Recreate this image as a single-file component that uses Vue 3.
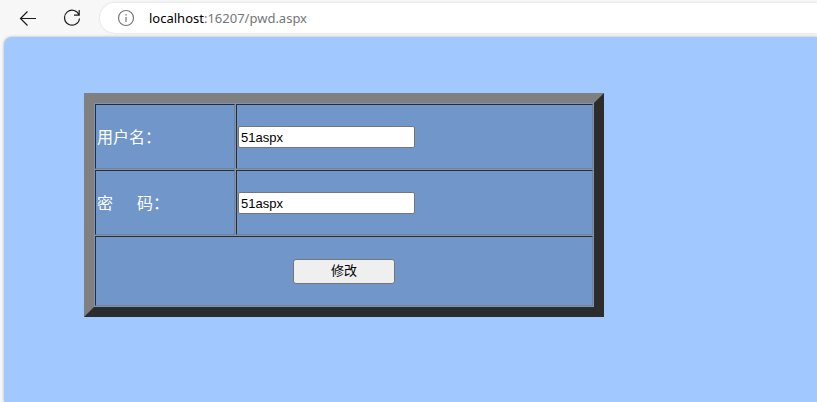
<template>
  <div class="browser">
    <header class="toolbar">
      <button type="button" class="nav-btn" aria-label="Back">
        <svg width="18" height="18" viewBox="0 0 18 18">
          <path d="M17 9.5H1.5M8.5 2.5L1.5 9.5L8.5 16.5" />
        </svg>
      </button>
      <button type="button" class="nav-btn" aria-label="Refresh">
        <svg width="18" height="18" viewBox="0 0 18 18">
          <path d="M16.2 6.4A7.5 7.5 0 1 0 16.5 9.5M16.2 1V6.2H11" />
        </svg>
      </button>
      <div class="address">
        <svg class="info" width="18" height="18" viewBox="0 0 18 18">
          <circle cx="9" cy="9" r="7.5" />
          <path d="M9 8V13M9 5V6.6" />
        </svg>
        <span class="url"><span class="host">{{ host }}</span>{{ path }}</span>
      </div>
    </header>

    <main class="page">
      <form class="pwd-form" @submit.prevent>
        <table class="pwd-table">
          <tbody>
            <tr v-for="field in fields" :key="field.id" class="field-row">
              <td class="label-cell">
                <label :for="field.id">{{ field.label }}</label>
              </td>
              <td>
                <input :id="field.id" v-model="field.value" type="text" class="text-box" />
              </td>
            </tr>
            <tr class="action-row">
              <td colspan="2">
                <button type="submit" class="submit-btn">修改</button>
              </td>
            </tr>
          </tbody>
        </table>
      </form>
    </main>
  </div>
</template>

<script setup>
import { ref } from 'vue'

const host = 'localhost'
const path = ':16207/pwd.aspx'

const fields = ref([
  { id: 'username', label: '用户名：', value: '51aspx' },
  { id: 'password', label: '密\u00a0\u00a0\u00a0\u00a0\u00a0\u00a0码：', value: '51aspx' }
])
</script>

<style>
body {
  margin: 0;
  background: #f7f7f7;
}
</style>

<style scoped>
.browser {
  display: flex;
  flex-direction: column;
  min-height: 100vh;
  overflow: hidden;
}

.toolbar {
  box-sizing: border-box;
  display: flex;
  align-items: center;
  height: 37px;
  padding: 0 0 1px 6px;
}

.nav-btn {
  display: flex;
  align-items: center;
  justify-content: center;
  width: 44px;
  height: 34px;
  padding: 0;
  border: 0;
  background: none;
}

.nav-btn svg {
  fill: none;
  stroke: #1b1b1b;
  stroke-width: 1.2;
}

.address {
  display: flex;
  flex: 1;
  align-items: center;
  gap: 14px;
  height: 30px;
  margin-left: 6px;
  padding-left: 17px;
  border-radius: 15px 0 0 15px;
  background: #fff;
  box-shadow: 0 0 3px rgba(0, 0, 0, 0.12);
}

.info {
  fill: none;
  stroke: #767676;
  stroke-width: 1.2;
}

.url {
  font: 13px/20px 'Noto Sans', 'Open Sans', sans-serif;
  color: #767676;
}

.host {
  color: #000;
}

.page {
  flex: 1;
  margin-left: 4px;
  padding: 56px 16px 56px 80px;
  border-top-left-radius: 8px;
  background: #a2c9ff;
  box-shadow: 0 0 3px rgba(0, 0, 0, 0.3);
}

.pwd-form {
  max-width: 520px;
}

.pwd-table {
  width: 100%;
  border: 10px solid;
  border-color: #808080 #2c2c2c #2c2c2c #808080;
  border-spacing: 1px;
  background: #7197ca;
  font: 16px/20px 'Liberation Serif', 'Noto Sans CJK SC', sans-serif;
  color: #fff;
}

.pwd-table td {
  box-sizing: border-box;
  padding: 1px;
  border: 1px solid;
  border-color: #2c2c2c #808080 #808080 #2c2c2c;
  vertical-align: middle;
}

.field-row {
  height: 65px;
}

.action-row {
  height: 70px;
  text-align: center;
}

.pwd-table .label-cell {
  width: 140px;
  padding-top: 3px;
}

.text-box {
  display: block;
  box-sizing: border-box;
  width: 177px;
  height: 22px;
  padding: 2px 2px 0;
  border: 1px solid #767676;
  border-radius: 2px;
  background: #fff;
  font: 13px 'Liberation Sans', Arial, sans-serif;
  color: #000;
}

.submit-btn {
  width: 102px;
  height: 25px;
  padding: 0;
  border: 1px solid #767676;
  border-radius: 3px;
  background: #efefef;
  font: 13px/20px 'Liberation Sans', 'Noto Sans CJK SC', sans-serif;
  color: #000;
}
</style>
